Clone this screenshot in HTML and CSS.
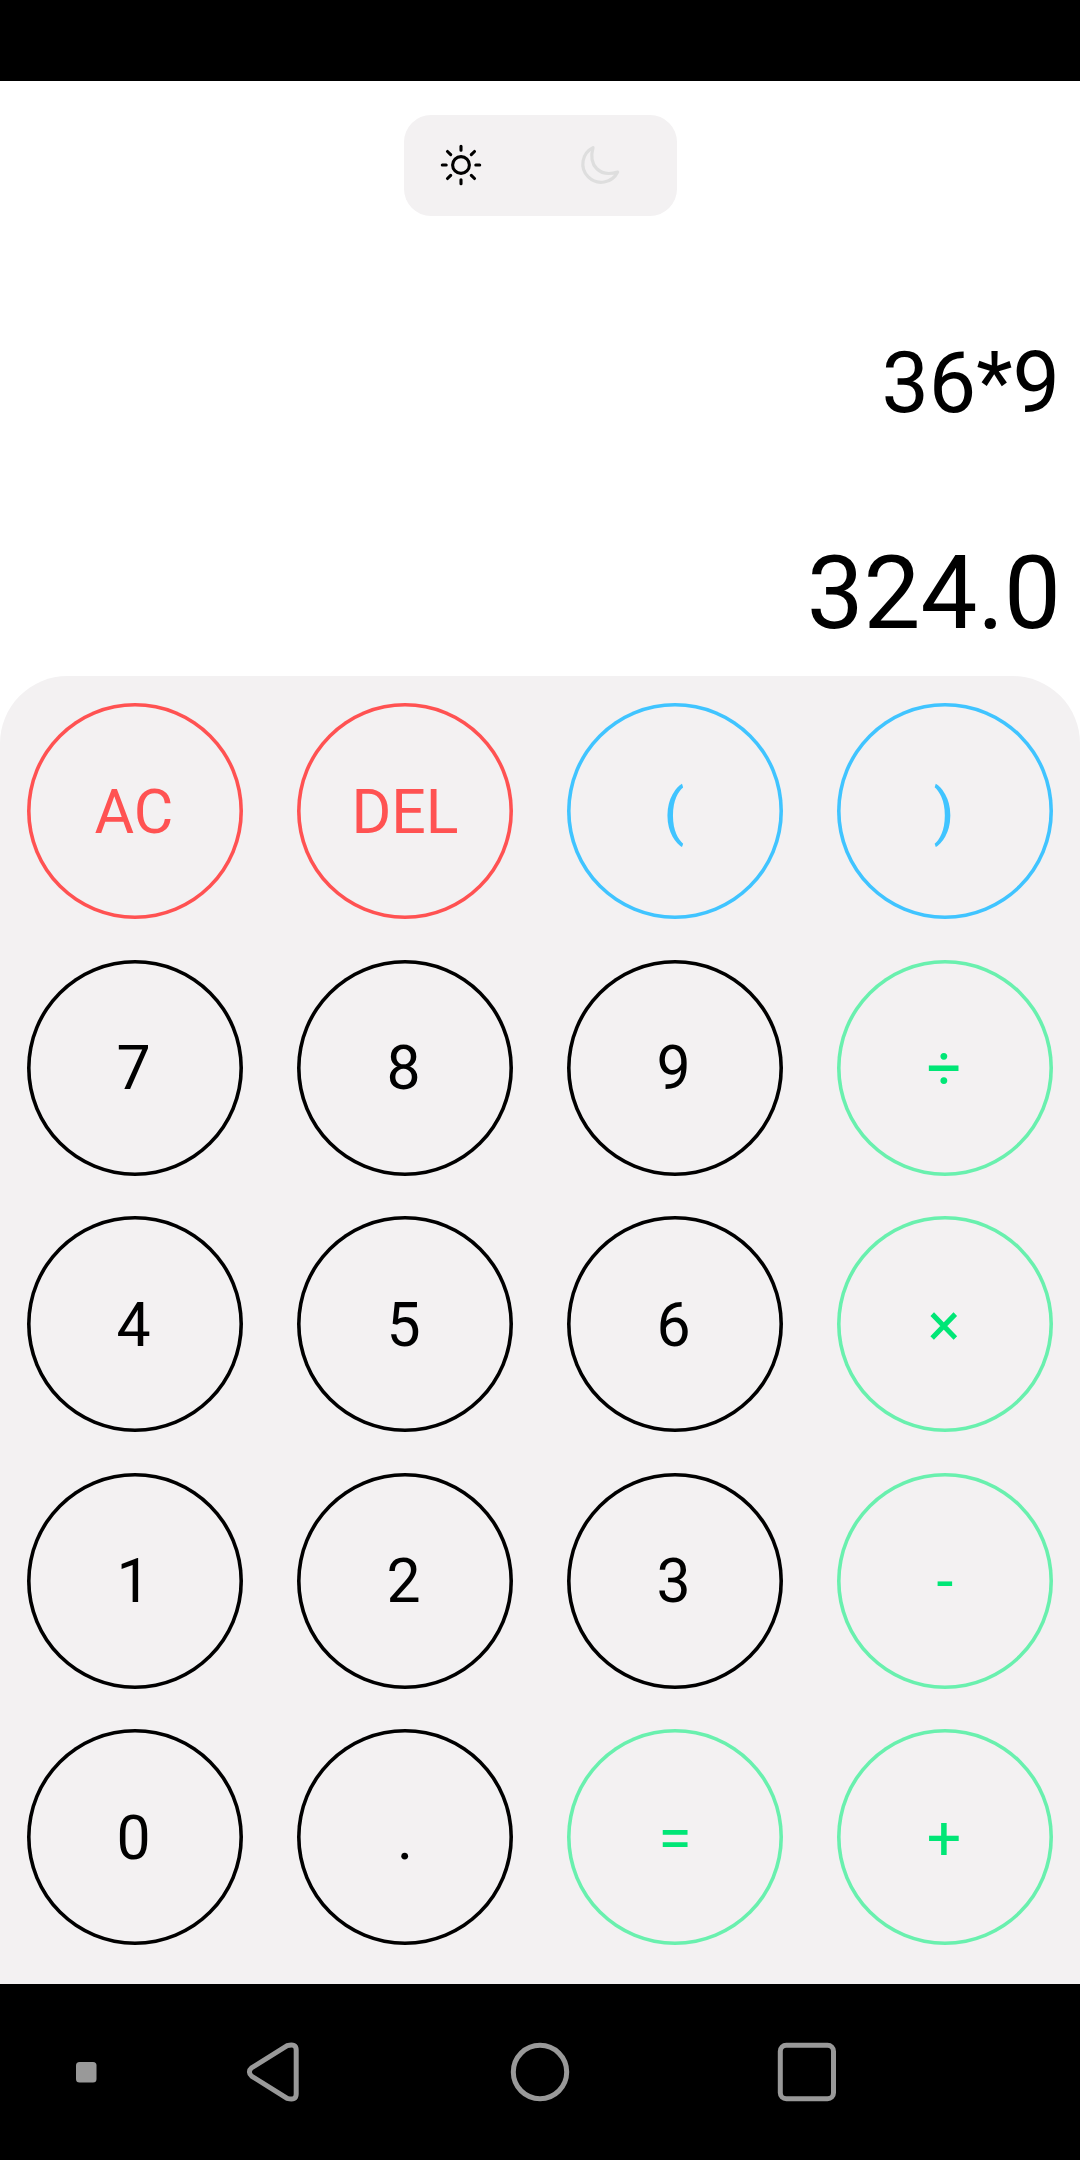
FILE: index.html
```html
<!DOCTYPE html>
<html lang="en">
<head>
<meta charset="utf-8">
<title>Calculator</title>
<link rel="stylesheet" href="styles.css">
</head>
<body>
<div class="status-bar"></div>
<main class="app">
  <section class="display">
    <div class="theme-toggle">
      <svg class="sun" width="44" height="44" viewBox="-22 -22 44 44">
        <circle r="8.4"/>
        <path d="M0-18.7V-14.8M0 18.7V14.8M-18.7 0H-14.8M18.7 0H14.8M-13.5-13.5L-10.3-10.3M13.5-13.5L10.3-10.3M-13.5 13.5L-10.3 10.3M13.5 13.5L10.3 10.3"/>
      </svg>
      <svg class="moon" width="44" height="44" viewBox="-22 -22 44 44">
        <path d="M-7-17.400A18.300 18.300 0 1 0 17.600 7C0 12.500-12 1-7-17.400Z"/>
      </svg>
    </div>
    <div class="expression">36*9</div>
    <div class="result">324.0</div>
  </section>
  <section class="keypad">
    <button class="key red">AC</button>
    <button class="key red wide">DEL</button>
    <button class="key blue">(</button>
    <button class="key blue">)</button>
    <button class="key digit">7</button>
    <button class="key digit">8</button>
    <button class="key digit">9</button>
    <button class="key green">÷</button>
    <button class="key digit">4</button>
    <button class="key digit">5</button>
    <button class="key digit">6</button>
    <button class="key green">×</button>
    <button class="key digit">1</button>
    <button class="key digit">2</button>
    <button class="key digit">3</button>
    <button class="key green wide">-</button>
    <button class="key digit">0</button>
    <button class="key wide">.</button>
    <button class="key green wide">=</button>
    <button class="key green">+</button>
  </section>
</main>
<nav class="nav-bar">
  <svg class="nav-icons" width="1080" height="176" viewBox="0 0 1080 176">
    <rect class="dot" x="76" y="78" width="20.500" height="20.500" rx="3.500"/>
    <path d="M287.200 61.600L251.800 83.700Q247 87.800 251.800 92.300L287.200 114.400Q296.200 117 296.200 110V66Q296.200 59 287.200 61.600Z"/>
    <circle cx="540" cy="88" r="26.700"/>
    <rect x="780.300" y="61.300" width="53.200" height="53.400" rx="6"/>
  </svg>
</nav>
</body>
</html>
```
FILE: styles.css
```css
* { box-sizing: border-box; }

body {
  margin: 0;
  width: 1080px;
  height: 2160px;
  display: flex;
  flex-direction: column;
  background: #fff;
  color: #000;
  font-family: Roboto, sans-serif;
}

.status-bar { height: 81px; background: #000; }

.app { flex: 1; display: flex; flex-direction: column; }

.display {
  height: 595px;
  padding: 33.75px 19px 0;
  display: flex;
  flex-direction: column;
  align-items: flex-end;
}

.theme-toggle {
  align-self: center;
  width: 273px;
  height: 101.250px;
  padding: 0 55px 0 35px;
  display: flex;
  align-items: center;
  justify-content: space-between;
  border-radius: 27px;
  background: #f3f1f2;
}

.theme-toggle svg { fill: none; stroke-linecap: round; stroke-linejoin: round; }
.sun { stroke: #000; stroke-width: 3.100px; }
.moon { stroke: #dedede; stroke-width: 3.200px; }

.expression { margin: 118px 1px 0 0; font-size: 84.375px; line-height: 100px; }
.result { margin-top: 100px; font-size: 101.250px; line-height: 120px; }

.keypad {
  flex: 1;
  display: grid;
  grid-template-columns: repeat(4, 216px);
  grid-auto-rows: 216px;
  gap: 40.500px 54px;
  padding: 27px 27px 0;
  border-radius: 67.500px 67.500px 0 0;
  background: #f3f1f2;
}

.key {
  border: 0;
  padding: 3px 2px 0 0;
  border-radius: 50%;
  background: none;
  box-shadow: inset 0 0 0 3.600px #000;
  color: #000;
  font: 60.750px/72px Roboto, sans-serif;
}

.digit { padding-right: 3px; }
.wide { padding-right: 0; }

.red { color: #ff5252; box-shadow: inset 0 0 0 3.600px #ff5252; }
.blue { color: #40c4ff; box-shadow: inset 0 0 0 3.600px #40c4ff; }
.green { color: #00e676; box-shadow: inset 0 0 0 3.600px #69f0ae; }

.nav-bar { height: 176px; background: #000; }
.nav-icons { display: block; fill: none; stroke: #999; stroke-width: 5px; }
.nav-icons .dot { fill: #999; stroke: none; }
```
